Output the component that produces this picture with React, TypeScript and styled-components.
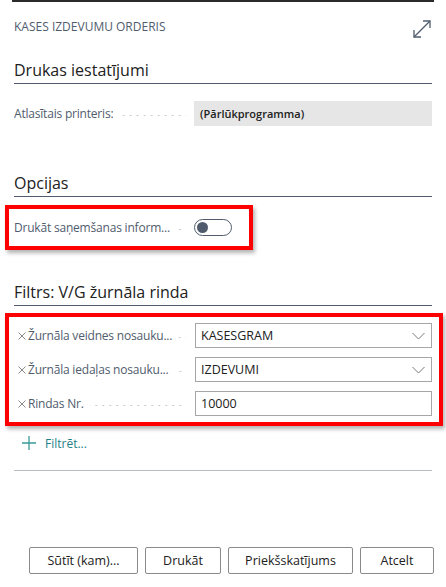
import React from "react";
import styled, { createGlobalStyle } from "styled-components";

const GlobalStyle = createGlobalStyle`
  html, body { margin: 0; padding: 0; background: #ffffff; }
  body { font-family: "Open Sans", "Noto Sans", sans-serif; }
  * { box-sizing: border-box; }
`;

const Panel = styled.div`
  width: 446px;
  height: 587px;
  display: flex;
  flex-direction: column;
  padding: 0 14px 13px 14px;
  background: #fff;
  color: #212121;
  overflow: hidden;
`;

const TopShade = styled.div`
  height: 2px;
  margin: 0 -2px 0 -2px;
  background: #2a2a2a;
`;

const Header = styled.div`
  display: flex;
  align-items: flex-start;
  justify-content: space-between;
  margin-top: 17px;
  height: 20px;
`;

const Title = styled.div`
  font-size: 12px;
  line-height: 16px;
  color: #505c6d;
`;

const ExpandButton = styled.div`
  width: 20px;
  height: 20px;
  color: #505c6d;
`;

const SectionTitle = styled.div<{ $top: number }>`
  margin-top: ${(p) => p.$top}px;
  font-size: 16px;
  line-height: 22px;
  font-weight: 400;
  color: #212121;
  padding-bottom: 2px;
  border-bottom: 1px solid #505c6d;
`;

const FieldRow = styled.div<{ $top?: number }>`
  display: grid;
  grid-template-columns: 172px 1fr;
  column-gap: 8px;
  align-items: center;
  height: 25px;
  margin-top: ${(p) => p.$top ?? 0}px;
`;

const Label = styled.div<{ $indent?: boolean }>`
  display: flex;
  align-items: center;
  min-width: 0;
  font-size: 12px;
  letter-spacing: -0.2px;
  color: #505c6d;
  padding-left: ${(p) => (p.$indent ? "4px" : "0")};
  &::after {
    content: "";
    flex: 1 0 3px;
    height: 1px;
    margin-left: 6px;
    margin-top: 4px;
    background-image: linear-gradient(to right, #c8ccd1 2px, transparent 2px);
    background-size: 7px 1px;
    background-repeat: repeat-x;
    background-position: right center;
  }
`;

const LabelText = styled.span`
  white-space: nowrap;
  overflow: hidden;
  min-width: 0;
`;

const ClearMark = styled.span`
  flex: none;
  width: 8px;
  height: 10px;
  margin-right: 2px;
  display: inline-flex;
  align-items: center;
`;

const ReadOnlyValue = styled.div`
  height: 25px;
  background: #e6e6e6;
  font-size: 11px;
  font-weight: 600;
  display: flex;
  align-items: center;
  padding-left: 6px;
  color: #212121;
`;

const Input = styled.div`
  height: 25px;
  border: 1px solid #a6a6a6;
  background: #fff;
  font-size: 12.5px;
  display: flex;
  align-items: center;
  justify-content: space-between;
  padding: 0 6px 0 5px;
  color: #212121;
  margin-left: 1px;
`;

const Highlight = styled.div<{ $fit?: boolean; $top: number }>`
  margin-top: ${(p) => p.$top}px;
  margin-left: -9px;
  margin-right: ${(p) => (p.$fit ? "0" : "-11px")};
  align-self: ${(p) => (p.$fit ? "flex-start" : "stretch")};
  width: ${(p) => (p.$fit ? "248px" : "auto")};
  border: 4px solid #ff0000;
  box-shadow: 2px 3px 4px rgba(0, 0, 0, 0.3);
  padding: 6px 7px 6px 5px;
  display: flex;
  flex-direction: column;
  gap: 9px;
`;

const Toggle = styled.div`
  width: 38px;
  height: 17px;
  border: 1px solid #505c6d;
  border-radius: 9px;
  display: flex;
  align-items: center;
  padding-left: 2px;
  &::before {
    content: "";
    width: 11px;
    height: 11px;
    border-radius: 50%;
    background: #505c6d;
  }
`;

const AddFilter = styled.div`
  display: flex;
  align-items: center;
  gap: 9px;
  margin-top: 9px;
  margin-left: 8px;
  height: 16px;
  font-size: 12px;
  color: #1f7f88;
`;

const Separator = styled.div`
  margin-top: 19px;
  height: 1px;
  background: #b6bcc4;
`;

const Spacer = styled.div`
  flex: 1;
`;

const ButtonBar = styled.div`
  display: flex;
  justify-content: flex-end;
  gap: 7px;
  margin-right: -2px;
`;

const Button = styled.button<{ $w: number }>`
  width: ${(p) => p.$w}px;
  height: 27px;
  border: 1px solid #8a8a8a;
  border-radius: 2px;
  background: #fff;
  font-family: "Open Sans", "Noto Sans", sans-serif;
  font-size: 12.5px;
  color: #212121;
  padding: 0;
`;

const Chevron = () => (
  <svg width="13" height="8" viewBox="0 0 13 8">
    <path d="M0.5 1 L6.5 7 L12.5 1" fill="none" stroke="#7a7a7a" strokeWidth="1" />
  </svg>
);

const XMark = () => (
  <svg width="8" height="8" viewBox="0 0 8 8">
    <path d="M0.5 0.5 L7.5 7.5 M7.5 0.5 L0.5 7.5" stroke="#8a8a8a" strokeWidth="1" />
  </svg>
);

const FilterRow = ({ label, value, select }: { label: string; value: string; select?: boolean }) => (
  <FieldRow>
    <Label $indent>
      <ClearMark>
        <XMark />
      </ClearMark>
      <LabelText>{label}</LabelText>
    </Label>
    <Input>
      <span>{value}</span>
      {select && <Chevron />}
    </Input>
  </FieldRow>
);

export default function App() {
  return (
    <>
      <GlobalStyle />
      <Panel>
        <TopShade />
        <Header>
          <Title>KASES IZDEVUMU ORDERIS</Title>
          <ExpandButton>
            <svg width="20" height="20" viewBox="0 0 20 20" fill="none" stroke="currentColor" strokeWidth="1.3">
              <path d="M2 18 L18 2" />
              <path d="M11 2 L18 2 L18 9" />
              <path d="M2 11 L2 18 L9 18" />
            </svg>
          </ExpandButton>
        </Header>

        <SectionTitle $top={20}>Drukas iestatījumi</SectionTitle>
        <FieldRow $top={17}>
          <Label>
            <LabelText>Atlasītais printeris:</LabelText>
          </Label>
          <ReadOnlyValue>(Pārlūkprogramma)</ReadOnlyValue>
        </FieldRow>

        <SectionTitle $top={46}>Opcijas</SectionTitle>
        <Highlight $fit $top={8}>
          <FieldRow>
            <Label>
              <LabelText>Drukāt saņemšanas inform...</LabelText>
            </Label>
            <Toggle />
          </FieldRow>
        </Highlight>

        <SectionTitle $top={31}>Filtrs: V/G žurnāla rinda</SectionTitle>
        <Highlight $top={7}>
          <FilterRow label="Žurnāla veidnes nosauku..." value="KASESGRAM" select />
          <FilterRow label="Žurnāla iedaļas nosauku..." value="IZDEVUMI" select />
          <FilterRow label="Rindas Nr." value="10000" />
        </Highlight>

        <AddFilter>
          <svg width="14" height="14" viewBox="0 0 14 14" stroke="#3a9a9a" strokeWidth="1.3">
            <path d="M7 0 L7 14 M0 7 L14 7" />
          </svg>
          <span>Filtrēt...</span>
        </AddFilter>
        <Separator />
        <Spacer />
        <ButtonBar>
          <Button $w={109}>Sūtīt (kam)...</Button>
          <Button $w={76}>Drukāt</Button>
          <Button $w={125}>Priekšskatījums</Button>
          <Button $w={74}>Atcelt</Button>
        </ButtonBar>
      </Panel>
    </>
  );
}
